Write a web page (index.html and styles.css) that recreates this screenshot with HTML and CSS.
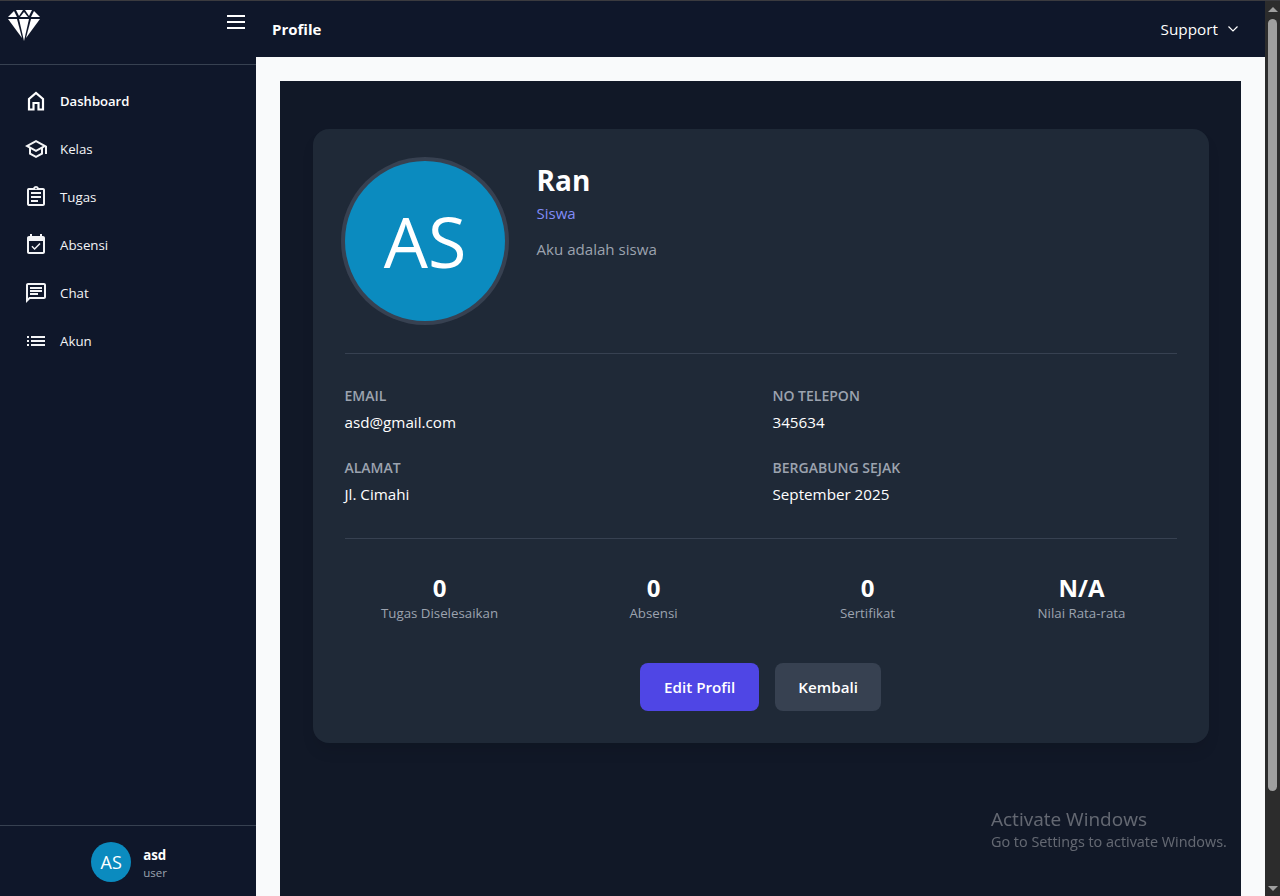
FILE: index.html
```html
<!DOCTYPE html>
<html lang="en">
<head>
    <meta charset="UTF-8" />
    <meta name="viewport" content="width=device-width, initial-scale=1.0" />
    <title>Profile</title>
    <link rel="stylesheet" href="styles.css">
</head>
<body>
    <div class="window-line"></div>
    <div class="window">
        <aside class="sidebar">
            <div class="side-top">
                <svg class="logo" viewBox="0 0 32 32" fill="#fff">
                    <polygon points="0,7 6,1 9,7" />
                    <polygon points="8,0 15,0 11,6" />
                    <polygon points="17,0 24,0 21,6" />
                    <polygon points="23,7 26,1 32,7" />
                    <polygon points="12,7 16,2 20,7" />
                    <polygon points="0,9 9,9 14,28" />
                    <polygon points="11,9 21,9 16,31" />
                    <polygon points="23,9 32,9 18,28" />
                </svg>
                <button class="burger" type="button"><span></span><span></span><span></span></button>
            </div>
            <nav class="side-nav">
                <a class="nav-item active" href="#">
                    <svg viewBox="0 0 24 24"><path d="M5 20.5V10l7-6 7 6v10.500h-4.500V14h-5v6.500z" fill="none" stroke="currentColor" stroke-width="2.200" /></svg>
                    Dashboard
                </a>
                <a class="nav-item" href="#">
                    <svg viewBox="0 0 24 24"><path d="M12 3L1 9l4 2.180v6L12 21l7-3.820v-6l2-1.090V17h2V9L12 3zm6.820 6L12 12.720 5.180 9 12 5.280 18.820 9zM17 15.990l-5 2.730-5-2.730v-3.720L12 15l5-2.730v3.720z" /></svg>
                    Kelas
                </a>
                <a class="nav-item" href="#">
                    <svg viewBox="0 0 24 24"><path d="M7 15h7v2H7zm0-4h10v2H7zm0-4h10v2H7zm12-4h-4.180C14.400 1.840 13.300 1 12 1c-1.300 0-2.400.84-2.820 2H5c-.14 0-.27.01-.4.04-.39.08-.74.28-1.010.55-.18.18-.33.4-.43.64-.1.23-.16.49-.16.77v14c0 .27.06.54.16.78s.25.45.43.64c.27.27.62.47 1.010.55.13.02.26.03.4.03h14c1.100 0 2-.9 2-2V5c0-1.100-.9-2-2-2zm-7-.25c.41 0 .75.34.75.75s-.34.75-.75.75-.75-.34-.75-.75.34-.75.75-.75zM19 19H5V5h14v14z" /></svg>
                    Tugas
                </a>
                <a class="nav-item" href="#">
                    <svg viewBox="0 0 24 24"><path d="M16.530 11.060L15.470 10l-4.880 4.880-2.120-2.120-1.060 1.060L10.590 17l5.940-5.940zM19 3h-1V1h-2v2H8V1H6v2H5c-1.110 0-1.990.9-1.990 2L3 19c0 1.100.89 2 2 2h14c1.100 0 2-.9 2-2V5c0-1.100-.9-2-2-2zm0 16H5V8h14v11z" /></svg>
                    Absensi
                </a>
                <a class="nav-item" href="#">
                    <svg viewBox="0 0 24 24"><path d="M20 2H4c-1.100 0-1.990.9-1.990 2L2 22l4-4h14c1.100 0 2-.9 2-2V4c0-1.100-.9-2-2-2zm0 14H5.170L4 17.170V4h16v12zM6 12h8v2H6zm0-3h12v2H6zm0-3h12v2H6z" /></svg>
                    Chat
                </a>
                <a class="nav-item" href="#">
                    <svg viewBox="0 0 24 24"><path d="M3 13h2v-2H3v2zm0 4h2v-2H3v2zm0-8h2V7H3v2zm4 4h14v-2H7v2zm0 4h14v-2H7v2zM7 7v2h14V7H7z" /></svg>
                    Akun
                </a>
            </nav>
            <div class="side-user">
                <div class="user-avatar">AS</div>
                <div class="user-text">
                    <div class="user-name">asd</div>
                    <div class="user-role">user</div>
                </div>
            </div>
        </aside>

        <div class="content">
            <header class="topbar">
                <h1>Profile</h1>
                <a class="support" href="#">
                    Support
                    <svg viewBox="0 0 12 12"><path d="M1.500 3.500L6 8l4.500-4.500" fill="none" stroke="currentColor" stroke-width="1.200" /></svg>
                </a>
            </header>
            <main class="page">
                <section class="panel">
                    <div class="card">
                        <div class="card-head">
                            <div class="big-avatar">AS</div>
                            <div class="head-text">
                                <h2>Ran</h2>
                                <p class="role">Siswa</p>
                                <p class="bio">Aku adalah siswa</p>
                            </div>
                        </div>
                        <div class="info-grid">
                            <div>
                                <div class="info-label">Email</div>
                                <div class="info-value">asd@gmail.com</div>
                            </div>
                            <div>
                                <div class="info-label">No Telepon</div>
                                <div class="info-value">345634</div>
                            </div>
                            <div>
                                <div class="info-label">Alamat</div>
                                <div class="info-value">Jl. Cimahi</div>
                            </div>
                            <div>
                                <div class="info-label">Bergabung Sejak</div>
                                <div class="info-value">September 2025</div>
                            </div>
                        </div>
                        <div class="stats">
                            <div>
                                <div class="stat-num">0</div>
                                <div class="stat-label">Tugas Diselesaikan</div>
                            </div>
                            <div>
                                <div class="stat-num">0</div>
                                <div class="stat-label">Absensi</div>
                            </div>
                            <div>
                                <div class="stat-num">0</div>
                                <div class="stat-label">Sertifikat</div>
                            </div>
                            <div>
                                <div class="stat-num">N/A</div>
                                <div class="stat-label">Nilai Rata-rata</div>
                            </div>
                        </div>
                        <div class="actions">
                            <a class="btn btn-primary" href="#">Edit Profil</a>
                            <a class="btn btn-dark" href="#">Kembali</a>
                        </div>
                    </div>
                </section>
            </main>
        </div>

        <div class="scrollbar">
            <span class="arrow-up"></span>
            <div class="thumb"></div>
            <span class="arrow-down"></span>
        </div>
    </div>

    <div class="watermark">
        <div class="wm-title">Activate Windows</div>
        <div class="wm-sub">Go to Settings to activate Windows.</div>
    </div>
</body>
</html>
```

FILE: styles.css
```css
* {
    box-sizing: border-box;
}

html, body {
    height: 100%;
    overflow: hidden;
}

body {
    margin: 0;
    background-color: #0f172a;
    color: white;
    font-family: "Open Sans", "Noto Sans", sans-serif;
    display: flex;
    flex-direction: column;
}

a {
    color: inherit;
    text-decoration: none;
}

.window-line {
    height: 1px;
    background-color: #3b3b3f;
}

.window {
    flex: 1;
    display: flex;
    min-height: 0;
}

/* sidebar */
.sidebar {
    width: 256px;
    background-color: #0f172a;
    display: flex;
    flex-direction: column;
}

.side-top {
    height: 64px;
    padding: 9px 11px 0 8px;
    border-bottom: 1px solid #374151;
    display: flex;
    justify-content: space-between;
    align-items: flex-start;
}

.logo {
    width: 32px;
    height: 32px;
}

.burger {
    width: 18px;
    padding: 5px 0 0;
    background: none;
    border: none;
    display: flex;
    flex-direction: column;
    gap: 4px;
}

.burger span {
    height: 2px;
    background-color: white;
}

.side-nav {
    flex: 1;
    padding-top: 12px;
    display: flex;
    flex-direction: column;
}

.nav-item {
    height: 48px;
    padding-left: 24px;
    display: flex;
    align-items: center;
    gap: 12px;
    font-size: 13.300px;
    color: #f3f4f6;
}

.nav-item svg {
    width: 24px;
    height: 24px;
    fill: currentColor;
}

.nav-item.active {
    font-size: 13.100px;
    font-weight: 600;
    color: white;
}

.side-user {
    height: 71px;
    padding: 2px 0 0 2px;
    border-top: 1px solid #374151;
    display: flex;
    align-items: center;
    justify-content: center;
    gap: 12px;
}

.user-avatar {
    width: 40px;
    height: 40px;
    border-radius: 50%;
    background-color: #0b8bbf;
    display: flex;
    align-items: center;
    justify-content: center;
    font-size: 18px;
}

.user-text {
    margin-top: 2px;
}

.user-name {
    font-size: 13.300px;
    font-weight: 700;
    line-height: 20px;
}

.user-role {
    font-size: 11.500px;
    color: #9ca3af;
    line-height: 16px;
}

/* top bar */
.content {
    flex: 1;
    min-width: 0;
    display: flex;
    flex-direction: column;
}

.topbar {
    height: 56px;
    padding: 0 26px 0 16px;
    background-color: #0f172a;
    display: flex;
    align-items: center;
    justify-content: space-between;
}

.topbar h1 {
    margin: 0;
    font-size: 15px;
    font-weight: 700;
}

.support {
    display: flex;
    align-items: center;
    gap: 9px;
    font-size: 15.300px;
}

.support svg {
    width: 12px;
    height: 12px;
}

/* main */
.page {
    flex: 1;
    min-height: 0;
    padding: 24px 24px 0;
    background-color: #f9fafb;
}

.panel {
    height: 100%;
    padding: 48px 32px;
    background-color: #111827;
}

.card {
    max-width: 896px;
    margin: 0 auto;
    padding: 32px;
    border-radius: 16px;
    background-color: #1f2937;
    box-shadow: 0 10px 15px -3px rgba(0, 0, 0, 0.1);
}

.card-head {
    display: flex;
    gap: 32px;
    padding-bottom: 32px;
    border-bottom: 1px solid #374151;
}

.big-avatar {
    width: 160px;
    height: 160px;
    padding-left: 1px;
    border-radius: 50%;
    background-color: #0b8bbf;
    box-shadow: 0 0 0 4px #374151;
    display: flex;
    align-items: center;
    justify-content: center;
    font-size: 70px;
}

.head-text h2 {
    margin: 0;
    font-size: 28px;
    font-weight: 700;
    line-height: 38px;
}

.role {
    margin: 4px 0 0;
    font-size: 15px;
    line-height: 20px;
    color: #818cf8;
}

.bio {
    margin: 16px 0 0;
    font-size: 15.100px;
    line-height: 20px;
    color: #9ca3af;
}

.info-grid {
    padding: 32px 0;
    border-bottom: 1px solid #374151;
    display: grid;
    grid-template-columns: 1fr 1fr;
    gap: 24px;
}

.info-label {
    font-size: 14px;
    font-weight: 600;
    line-height: 20px;
    text-transform: uppercase;
    color: #9ca3af;
}

.info-value {
    margin-top: 4px;
    font-size: 15.200px;
    line-height: 24px;
}

.stats {
    padding-top: 33px;
    display: grid;
    grid-template-columns: repeat(4, 1fr);
    gap: 24px;
    text-align: center;
}

.stat-num {
    font-size: 24px;
    font-weight: 700;
    line-height: 31px;
}

.stat-label {
    font-size: 13.300px;
    line-height: 20px;
    color: #9ca3af;
}

.actions {
    margin-top: 40px;
    display: flex;
    justify-content: center;
    gap: 16px;
}

.btn {
    height: 48px;
    padding: 0 24px;
    border-radius: 8px;
    display: flex;
    align-items: center;
    font-size: 15.200px;
    font-weight: 600;
}

.btn-primary {
    background-color: #4f46e5;
}

.btn-dark {
    padding: 0 23px;
    background-color: #374151;
}

/* fake browser scrollbar */
.scrollbar {
    width: 15px;
    background-color: #2c2c2c;
    display: flex;
    flex-direction: column;
    align-items: center;
    padding: 6px 0 5px;
}

.arrow-up {
    border-left: 5px solid transparent;
    border-right: 5px solid transparent;
    border-bottom: 5px solid #9f9f9f;
}

.arrow-down {
    border-left: 5px solid transparent;
    border-right: 5px solid transparent;
    border-top: 5px solid #9f9f9f;
}

.thumb {
    flex: 1;
    width: 9px;
    margin: 7px 0 95px;
    border-radius: 5px;
    background-color: #9f9f9f;
}

/* os overlay */
.watermark {
    position: fixed;
    left: 991px;
    top: 806px;
    color: rgba(255, 255, 255, 0.35);
    font-family: "Open Sans", sans-serif;
}

.wm-title {
    font-size: 19px;
    line-height: 26px;
}

.wm-sub {
    font-size: 14.400px;
    line-height: 20px;
}
```
